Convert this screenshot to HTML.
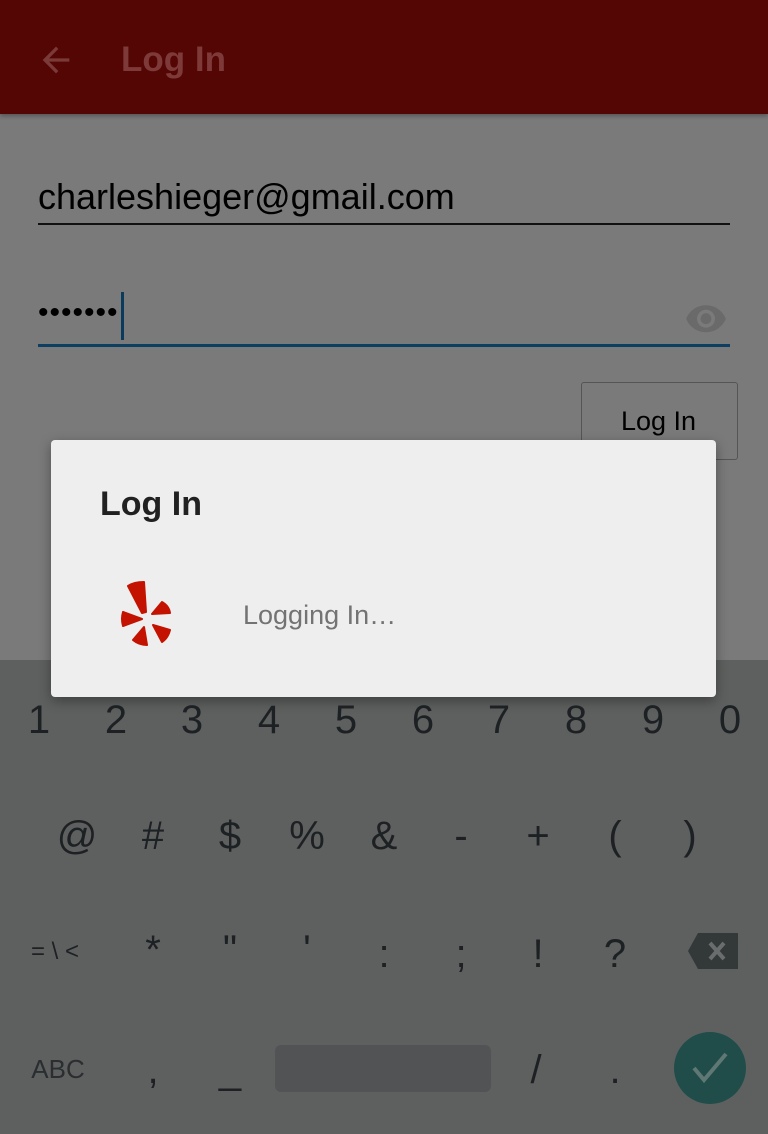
<!DOCTYPE html>
<html><head><meta charset="utf-8"><style>
body{margin:0;width:768px;height:1134px;position:relative;overflow:hidden;background:#7a7a7a;font-family:"Liberation Sans",Roboto,sans-serif}
.a{position:absolute}
.k{position:absolute;font-size:40px;color:#1d2124;transform:translateX(-50%)}
</style></head><body>
<div class="a" style="left:0;top:0;width:768px;height:114px;background:#540605;box-shadow:0 2px 4px rgba(0,0,0,.3)"></div>
<svg class="a" style="left:36px;top:40px" width="40" height="40" viewBox="0 0 24 24"><path d="M20 11H7.8l5.6-5.6L12 4l-8 8 8 8 1.4-1.4L7.8 13H20z" fill="#7a3a38"/></svg>
<div class="a" style="left:121px;top:40px;font-size:35px;font-weight:bold;color:#7d3a38">Log In</div>
<div class="a" style="left:38px;top:176px;font-size:36px;color:#000">charleshieger@gmail.com</div>
<div class="a" style="left:38px;top:223px;width:692px;height:2px;background:#111"></div>
<div class="a" style="left:38px;top:296px;font-size:30px;color:#000;letter-spacing:1px">•••••••</div>
<div class="a" style="left:121px;top:292px;width:3px;height:48px;background:#0a3a5c"></div>
<svg class="a" style="left:684px;top:298px" width="44" height="36" viewBox="0 0 24 20"><path d="M12 4C7 4 2.7 7.1 1 11.5 2.7 15.9 7 19 12 19s9.3-3.1 11-7.5C21.3 7.1 17 4 12 4zm0 12.5a5 5 0 110-10 5 5 0 010 10zm0-8a3 3 0 100 6 3 3 0 000-6z" fill="#6a6a6a"/></svg>
<div class="a" style="left:38px;top:344px;width:692px;height:3px;background:#0d3f61"></div>
<div class="a" style="left:581px;top:382px;width:157px;height:78px;border:1px solid #555;border-radius:3px;box-sizing:border-box"></div>
<div class="a" style="left:621px;top:406px;font-size:27px;color:#000">Log In</div>
<div class="a" style="left:0;top:660px;width:768px;height:474px;background:#5e605f"></div>
<div class="a" style="left:51px;top:440px;width:665px;height:257px;background:#eeeeee;border-radius:4px;box-shadow:0 4px 12px rgba(0,0,0,.35)"></div>
<div class="a" style="left:100px;top:485px;font-size:34px;font-weight:bold;color:#212121">Log In</div>
<svg class="a" style="left:0;top:0" width="768" height="700" viewBox="0 0 768 700">
<g fill="#c41200" stroke="#c41200" stroke-width="2" stroke-linejoin="round">
<path d="M128 586 Q134 582 144 582 L146 612 L142 613 Z"/>
<path d="M152 614 L162 602 Q169 606 170 613 Z"/>
<path d="M123 612 L142 619 L123 626 Q121 619 123 612 Z"/>
<path d="M133 640 L144 627 L147 645 Q139 645 133 640 Z"/>
<path d="M153 625 L170 630 Q168 638 162 642 Z"/>
</g></svg>
<div class="a" style="left:243px;top:600px;font-size:27px;color:#737373">Logging In…</div>
<div class="k" style="left:39px;top:698px">1</div><div class="k" style="left:116px;top:698px">2</div><div class="k" style="left:192px;top:698px">3</div><div class="k" style="left:269px;top:698px">4</div><div class="k" style="left:346px;top:698px">5</div><div class="k" style="left:423px;top:698px">6</div><div class="k" style="left:499px;top:698px">7</div><div class="k" style="left:576px;top:698px">8</div><div class="k" style="left:653px;top:698px">9</div><div class="k" style="left:730px;top:698px">0</div>
<div class="k" style="left:77px;top:814px">@</div><div class="k" style="left:153px;top:814px">#</div><div class="k" style="left:230px;top:814px">$</div><div class="k" style="left:307px;top:814px">%</div><div class="k" style="left:384px;top:814px">&amp;</div><div class="k" style="left:461px;top:814px">-</div><div class="k" style="left:538px;top:814px">+</div><div class="k" style="left:615px;top:814px">(</div><div class="k" style="left:690px;top:814px">)</div>
<div class="k" style="left:55px;top:938px;font-size:24px">= \ &lt;</div>
<div class="k" style="left:153px;top:928px">*</div><div class="k" style="left:230px;top:928px">"</div><div class="k" style="left:307px;top:928px">'</div><div class="k" style="left:384px;top:932px">:</div><div class="k" style="left:461px;top:932px">;</div><div class="k" style="left:538px;top:932px">!</div><div class="k" style="left:615px;top:932px">?</div>
<svg class="a" style="left:688px;top:933px" width="50" height="36" viewBox="0 0 50 36"><path d="M10 0H50V36H10L0 18Z" fill="#333839"/><path d="M22 10l14 16M36 10L22 26" stroke="#6a6d6d" stroke-width="4"/></svg>
<div class="k" style="left:58px;top:1054px;font-size:26px;color:#2a2e30">ABC</div>
<div class="k" style="left:153px;top:1048px">,</div><div class="k" style="left:230px;top:1048px">_</div>
<div class="a" style="left:275px;top:1045px;width:216px;height:47px;background:#525355;border-radius:6px"></div>
<div class="k" style="left:536px;top:1048px">/</div><div class="k" style="left:615px;top:1048px">.</div>
<div class="a" style="left:674px;top:1032px;width:72px;height:72px;border-radius:50%;background:#204d49"></div>
<svg class="a" style="left:690px;top:1048px" width="40" height="40" viewBox="0 0 40 40"><path d="M4 20l10 12L36 6" stroke="#5f7775" stroke-width="4" fill="none"/></svg>
</body></html>
